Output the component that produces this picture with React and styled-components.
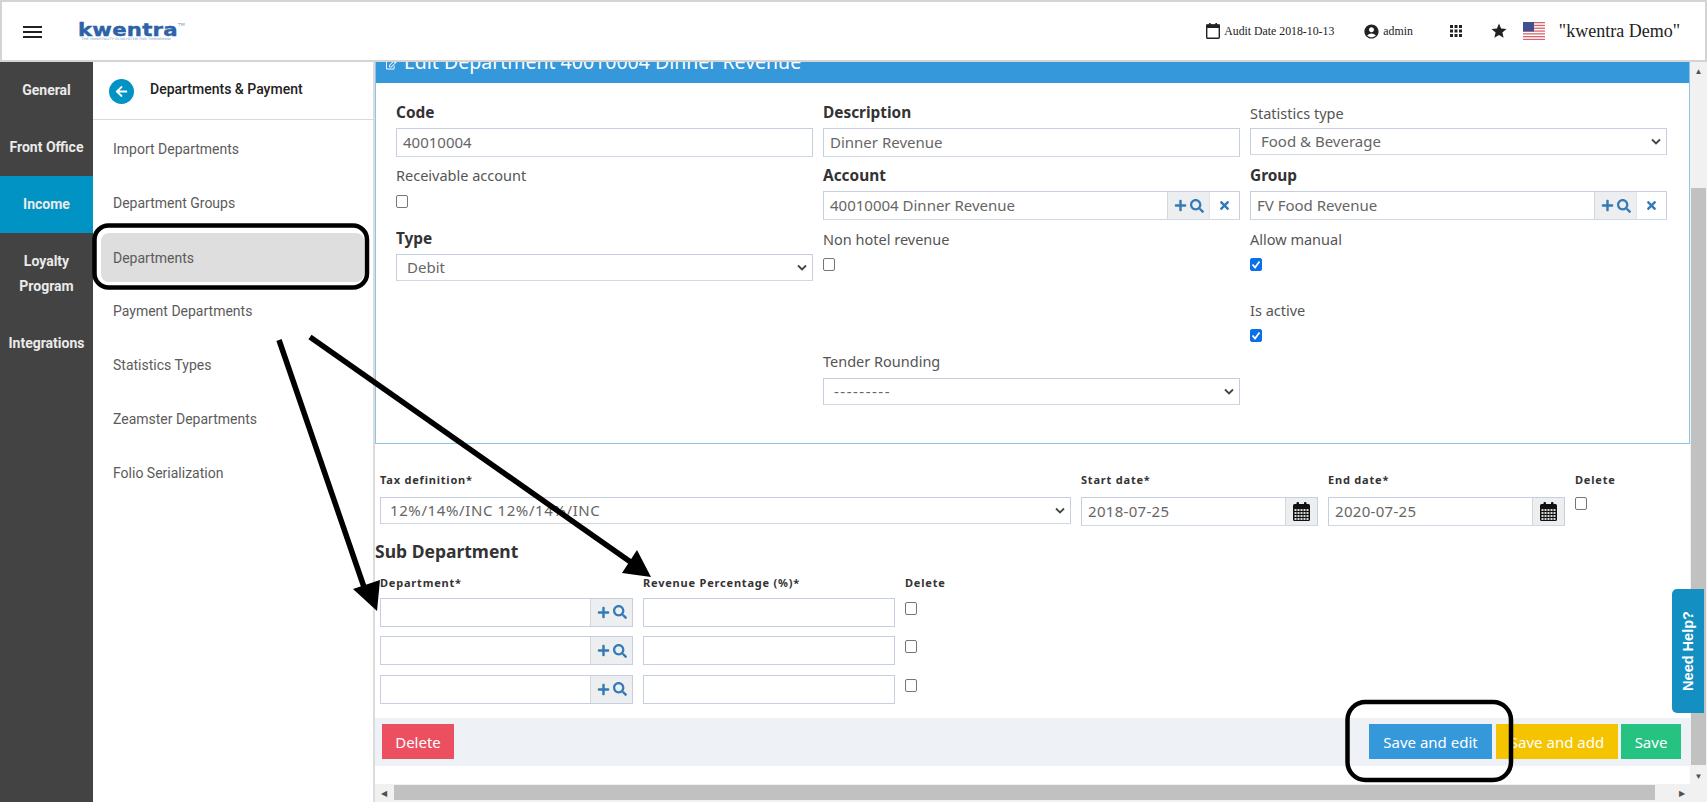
import React from 'react';
import styled, { createGlobalStyle } from 'styled-components';
import { FaPlus, FaSearch, FaTimes, FaRegEdit, FaArrowLeft } from 'react-icons/fa';
import { MdAccountCircle, MdApps, MdStar } from 'react-icons/md';

const Global = createGlobalStyle`
  html, body { margin: 0; padding: 0; height: 100%; overflow: hidden; background: #fff; }
  * { box-sizing: border-box; }
`;

const Page = styled.div`
  width: 1707px;
  height: 802px;
  position: relative;
  display: flex;
  flex-direction: column;
  overflow: hidden;
  font-family: "Noto Sans", sans-serif;
  color: #495057;
`;

const Topbar = styled.header`
  height: 62px;
  flex: none;
  display: flex;
  align-items: center;
  border: 2px solid #d4d4d4;
  padding: 0 25px 0 21px;
`;

const Burger = styled.div`
  width: 19px;
  height: 12px;
  border-top: 2px solid #222;
  border-bottom: 2px solid #222;
  margin-top: 2px;
  &::after { content: ""; display: block; height: 2px; margin-top: 3px; background: #222; }
`;

const Logo = styled.div`
  margin-left: 36px;
  margin-top: 0;
  width: 112px;
  color: #2b62a8;
  font-family: "DejaVu Sans", sans-serif;
  font-weight: 700;
  font-size: 18px;
  line-height: 15px;
  letter-spacing: 0.2px;
  -webkit-text-stroke: 0.4px #2b62a8;
  transform: scaleX(1.18);
  transform-origin: left center;
  sup { font-size: 4px; font-weight: 400; letter-spacing: 0; vertical-align: 10px; line-height: 0; -webkit-text-stroke: 0; color: #8a9aa8; }
  small {
    display: block;
    font-size: 3px;
    font-weight: 400;
    line-height: 4px;
    letter-spacing: 0.1px;
    margin-left: 3px;
    -webkit-text-stroke: 0;
    color: #6f93c4;
  }
`;

const TopRight = styled.div`
  margin-left: auto;
  display: flex;
  align-items: center;
  font-family: "Liberation Serif", serif;
  color: #222;
`;

const TopItem = styled.span`
  display: flex;
  align-items: center;
  gap: ${p => p.$gap || 4}px;
  font-size: ${p => p.$size || 11.8}px;
  margin-left: ${p => p.$ml || 0}px;
  svg { display: block; }
`;

const Body = styled.div`
  flex: 1;
  min-height: 0;
  display: flex;
`;

const Rail = styled.nav`
  width: 93px;
  flex: none;
  background: #434343;
`;

const RailItem = styled.div`
  height: ${p => p.$tall ? 82 : 57}px;
  padding-top: ${p => p.$tall ? 16 : 0}px;
  display: flex;
  align-items: ${p => p.$tall ? 'flex-start' : 'center'};
  justify-content: center;
  text-align: center;
  color: #eaeaea;
  font-family: Roboto, sans-serif;
  font-weight: 700;
  font-size: 14px;
  line-height: 25px;
  background: ${p => p.$active ? '#0093c4' : 'transparent'};
`;

const SubNav = styled.aside`
  width: 282px;
  flex: none;
  border-right: 2px solid #dcdcdc;
  font-family: Roboto, sans-serif;
`;

const SubHead = styled.div`
  height: 58px;
  display: flex;
  align-items: center;
  gap: 16px;
  padding: 0 0 4px 16px;
  border-bottom: 1px solid #dadada;
  font-weight: 500;
  font-size: 14px;
  color: #222;
`;

const BackBtn = styled.span`
  width: 25px;
  height: 25px;
  border-radius: 50%;
  background: #0093c4;
  color: #fff;
  display: flex;
  align-items: center;
  justify-content: center;
  margin-top: 5px;
`;

const SubList = styled.div`
  padding: 2px 8px 0 8px;
`;

const SubItem = styled.div`
  height: 54px;
  display: flex;
  align-items: center;
  padding-left: 12px;
  font-size: 14px;
  color: #5b5b5b;
  border-radius: 8px;
  ${p => p.$active && 'background: #dedede; margin: 3px 1px 2px 0; height: 49px;'}
`;

const Main = styled.main`
  flex: 1;
  min-width: 0;
  display: flex;
  flex-direction: column;
`;

const MainRow = styled.div`
  flex: 1;
  min-height: 0;
  display: flex;
`;

const Content = styled.div`
  flex: 1;
  min-width: 0;
  overflow: hidden;
`;

const Panel = styled.section`
  border: 1px solid #8cc4ea;
  border-top: 0;
  height: 382px;
`;

const PanelTitle = styled.div`
  height: 21px;
  background: #3498db;
  color: #fff;
  font-size: 19.5px;
  line-height: 21px;
  padding-left: 10px;
  overflow: hidden;
  display: flex;
  gap: 7px;
  span { margin-top: -11px; display: block; white-space: nowrap; }
  svg { margin-top: -3px; flex: none; }
`;

const FormGrid = styled.div`
  display: grid;
  grid-template-columns: 417px 417px 417px;
  column-gap: 10px;
  padding: 20px 0 0 20px;
`;

const Column = styled.div`
  display: flex;
  flex-direction: column;
`;

const Label = styled.label`
  display: block;
  height: 20px;
  line-height: 20px;
  font-size: ${p => p.$bold ? 15.4 : 14.5}px;
  color: ${p => p.$bold ? '#333' : '#555'};
  font-weight: ${p => p.$bold ? 700 : 400};
  margin-bottom: ${p => p.$mb ?? 5}px;
  margin-top: ${p => p.$mt || 0}px;
`;

const Field = styled.div`
  height: ${p => p.$h || 29}px;
  display: flex;
  align-items: center;
  border: 1px solid #c5cfdf;
  border-bottom-color: #d0d7e5;
  background: #fff;
  color: #666;
  font-size: 15px;
  padding-left: ${p => p.$pl ?? 6}px;
  overflow: hidden;
`;

const FieldText = styled.span`
  flex: 1;
  min-width: 0;
  white-space: nowrap;
  margin-top: -2px;
  letter-spacing: ${p => p.$ls || 0}px;
`;

const Chevron = styled.svg`
  width: 10px;
  height: 7px;
  margin-right: 5px;
  flex: none;
`;

const Addon = styled.span`
  height: 100%;
  display: flex;
  align-items: center;
  justify-content: center;
  gap: 3px;
  width: ${p => p.$w}px;
  flex: none;
  color: #337ab7;
  border-left: 1px solid ${p => p.$white ? '#dfe3ea' : '#d3d6da'};
  background: ${p => p.$white ? '#fff' : '#eceeef'};
`;

const Check = styled.span`
  display: block;
  width: 12px;
  height: 13px;
  border-radius: 2px;
  border: 1px solid ${p => p.$on ? '#0a6fe8' : '#767676'};
  background: ${p => p.$on ? '#0a6fe8' : '#fff'};
  color: #fff;
  margin-top: ${p => p.$mt || 0}px;
  margin-bottom: ${p => p.$mb || 0}px;
  svg { display: block; }
`;

const Rows = styled.div`
  padding-left: 5px;
`;

const SmallLabel = styled.div`
  font-size: 11px;
  font-weight: 700;
  letter-spacing: 0.8px;
  color: #333;
  line-height: 16px;
  height: 16px;
`;

const TaxGrid = styled.div`
  display: grid;
  grid-template-columns: 691px 237px 237px 40px;
  column-gap: 10px;
  margin-top: 28px;
`;

const TaxCol = styled.div`
  display: flex;
  flex-direction: column;
  gap: 9px;
`;

const SubTitle = styled.h3`
  margin: 13px 0 0 0;
  font-size: 17.5px;
  line-height: 24px;
  font-weight: 700;
  color: #333;
`;

const SubGrid = styled.div`
  display: grid;
  grid-template-columns: 253px 252px 50px;
  column-gap: 10px;
  row-gap: 9.5px;
  padding-left: 5px;
  margin-top: 12px;
  align-items: start;
`;

const HeaderCell = styled(SmallLabel)`
  margin-bottom: -3px;
`;

const Group = styled.div`
  display: flex;
  height: 29px;
  border: 1px solid #c5cfdf;
  background: #fff;
`;

const Actions = styled.div`
  height: 48px;
  margin-top: 14px;
  background: #eef1f6;
  display: flex;
  align-items: center;
  padding: 0 9px 0 7px;
  gap: 3px;
`;

const Btn = styled.button`
  height: 35px;
  width: ${p => p.$w}px;
  border: 0;
  padding: 0;
  color: #fff;
  background: ${p => p.$bg};
  font-family: "Noto Sans", sans-serif;
  font-size: 15px;
  margin-left: ${p => p.$ml || 0};
  margin-right: ${p => p.$mr || 0}px;
`;

const VScroll = styled.div`
  width: 17px;
  flex: none;
  background: #f1f1f1;
  display: flex;
  flex-direction: column;
  align-items: center;
`;

const VThumb = styled.div`
  width: 15px;
  flex: 1;
  margin: 109px 0 2px;
  background: #c1c1c1;
`;

const HThumb = styled.div`
  height: 15px;
  flex: 1;
  margin: 0 18px 0 2px;
  background: #c1c1c1;
`;

const HScroll = styled.div`
  height: 18px;
  flex: none;
  background: #f1f1f1;
  display: flex;
  align-items: center;
  padding: 0 17px 1px 0;
`;

const ScrollBtn = styled.div`
  width: 17px;
  height: 17px;
  flex: none;
  display: flex;
  align-items: center;
  justify-content: center;
  color: #505050;
  font-size: 8px;
`;

const Help = styled.div`
  position: absolute;
  right: 3px;
  top: 589px;
  width: 32px;
  height: 124px;
  border-radius: 5px 0 0 5px;
  background: #1390c1;
  color: #fff;
  display: flex;
  align-items: center;
  justify-content: center;
  font-family: "Liberation Sans", sans-serif;
  font-weight: 700;
  font-size: 14.5px;
  span { transform: rotate(-90deg); white-space: nowrap; display: block; }
`;

const Overlay = styled.svg`
  position: absolute;
  left: 0;
  top: 0;
  pointer-events: none;
`;

const ChevronIcon = () => (
  <Chevron viewBox="0 0 10 7"><path d="M1 1.5 L5 5.5 L9 1.5" fill="none" stroke="#444" strokeWidth="1.8" /></Chevron>
);

const Tick = () => (
  <svg width="10" height="11" viewBox="0 0 10 11"><path d="M1.5 5.5 L4 8.5 L8.5 2.5" fill="none" stroke="#fff" strokeWidth="1.8" /></svg>
);

const Flag = () => (
  <svg width="22" height="18" viewBox="0 0 22 18">
    <rect width="22" height="18" fill="#fff" />
    {[0, 2.8, 5.6, 8.4, 11.2, 14, 16.8].map(y => <rect key={y} y={y} width="22" height="1.3" fill="#d9636c" />)}
    <rect width="11" height="9.5" fill="#43508f" />
  </svg>
);

const AuditCalendar = () => (
  <svg width="14" height="16" viewBox="0 0 14 16">
    <rect x="0.7" y="2" width="12.6" height="13.3" rx="1" fill="none" stroke="#222" strokeWidth="1.4" />
    <rect x="0" y="1.5" width="14" height="3.5" fill="#222" />
    <rect x="3" y="0" width="1.6" height="2" fill="#222" />
    <rect x="9.4" y="0" width="1.6" height="2" fill="#222" />
  </svg>
);

const GridCalendar = () => (
  <svg width="17" height="19" viewBox="0 0 17 19">
    <rect x="0" y="2" width="17" height="17" rx="1.5" fill="#111" />
    <rect x="3.5" y="0" width="2.5" height="4" rx="1" fill="#111" />
    <rect x="11" y="0" width="2.5" height="4" rx="1" fill="#111" />
    {[7, 10, 13, 16].map(y => [1.5, 4.5, 7.5, 10.5, 13.5].map(x => (
      <rect key={x + '-' + y} x={x} y={y} width="2" height="2" fill="#d8d8d8" />
    )))}
  </svg>
);

const SearchAdd = () => (
  <>
    <FaPlus size={13} />
    <FaSearch size={14} />
  </>
);

const CalendarBtn = () => (
  <Addon $w={32}><GridCalendar /></Addon>
);

const rail = [
  { name: 'General' },
  { name: 'Front Office' },
  { name: 'Income', active: true },
  { name: 'Loyalty Program', tall: true },
  { name: 'Integrations' },
];

const subItems = ['Import Departments', 'Department Groups', 'Departments', 'Payment Departments', 'Statistics Types', 'Zeamster Departments', 'Folio Serialization'];

export default function App() {
  return (
    <Page>
      <Global />
      <Topbar>
        <Burger />
        <Logo>kwentra<sup>TM</sup><small>THE HOSPITALITY ECOSYSTEM FOR TOMORROW</small></Logo>
        <TopRight>
          <TopItem $gap={4}><AuditCalendar />Audit Date 2018-10-13</TopItem>
          <TopItem $ml={29} $gap={3}><MdAccountCircle size={17} />admin</TopItem>
          <TopItem $ml={34}><MdApps size={18} /></TopItem>
          <TopItem $ml={25}><MdStar size={18} /></TopItem>
          <TopItem $ml={15}><Flag /></TopItem>
          <TopItem $ml={14} $size={18}>"kwentra Demo"</TopItem>
        </TopRight>
      </Topbar>
      <Body>
        <Rail>
          {rail.map(r => <RailItem key={r.name} $active={r.active} $tall={r.tall}><span>{r.name}</span></RailItem>)}
        </Rail>
        <SubNav>
          <SubHead><BackBtn><FaArrowLeft size={13} /></BackBtn><span>Departments &amp; Payment</span></SubHead>
          <SubList>
            {subItems.map(s => <SubItem key={s} $active={s === 'Departments'}>{s}</SubItem>)}
          </SubList>
        </SubNav>
        <Main>
          <MainRow>
            <Content>
              <Panel>
                <PanelTitle><FaRegEdit size={11} /><span>Edit Department 40010004 Dinner Revenue</span></PanelTitle>
                <FormGrid>
                  <Column>
                    <Label $bold>Code</Label>
                    <Field><FieldText>40010004</FieldText></Field>
                    <Label $mt={8} $mb={10}>Receivable account</Label>
                    <Check $mb={21} />
                    <Label $bold>Type</Label>
                    <Field $pl={10} $h={27}><FieldText>Debit</FieldText><ChevronIcon /></Field>
                  </Column>
                  <Column>
                    <Label $bold>Description</Label>
                    <Field><FieldText>Dinner Revenue</FieldText></Field>
                    <Label $bold $mt={9}>Account</Label>
                    <Field>
                      <FieldText>40010004 Dinner Revenue</FieldText>
                      <Addon $w={42}><SearchAdd /></Addon>
                      <Addon $w={30} $white><FaTimes size={13} /></Addon>
                    </Field>
                    <Label $mt={9} $mb={9}>Non hotel revenue</Label>
                    <Check />
                    <Label $mt={80} $mb={7}>Tender Rounding</Label>
                    <Field $pl={10} $h={27}><FieldText $ls={1.5}>---------</FieldText><ChevronIcon /></Field>
                  </Column>
                  <Column>
                    <Label>Statistics type</Label>
                    <Field $pl={10} $h={27}><FieldText>Food &amp; Beverage</FieldText><ChevronIcon /></Field>
                    <Label $bold $mt={11}>Group</Label>
                    <Field>
                      <FieldText>FV Food Revenue</FieldText>
                      <Addon $w={42}><SearchAdd /></Addon>
                      <Addon $w={30} $white><FaTimes size={13} /></Addon>
                    </Field>
                    <Label $mt={9} $mb={9}>Allow manual</Label>
                    <Check $on><Tick /></Check>
                    <Label $mt={29} $mb={9}>Is active</Label>
                    <Check $on><Tick /></Check>
                  </Column>
                </FormGrid>
              </Panel>
              <Rows>
                <TaxGrid>
                  <TaxCol>
                    <SmallLabel>Tax definition*</SmallLabel>
                    <Field $pl={9} $h={27}><FieldText $ls={0.6}>12%/14%/INC 12%/14%/INC</FieldText><ChevronIcon /></Field>
                  </TaxCol>
                  <TaxCol>
                    <SmallLabel>Start date*</SmallLabel>
                    <Field><FieldText $ls={0.3}>2018-07-25</FieldText><CalendarBtn /></Field>
                  </TaxCol>
                  <TaxCol>
                    <SmallLabel>End date*</SmallLabel>
                    <Field><FieldText $ls={0.3}>2020-07-25</FieldText><CalendarBtn /></Field>
                  </TaxCol>
                  <TaxCol>
                    <SmallLabel>Delete</SmallLabel>
                    <Check />
                  </TaxCol>
                </TaxGrid>
              </Rows>
              <SubTitle>Sub Department</SubTitle>
              <SubGrid>
                <HeaderCell>Department*</HeaderCell>
                <HeaderCell>Revenue Percentage (%)*</HeaderCell>
                <HeaderCell>Delete</HeaderCell>
                {[0, 1, 2].map(i => (
                  <React.Fragment key={i}>
                    <Group><FieldText /><Addon $w={42}><SearchAdd /></Addon></Group>
                    <Group />
                    <Check $mt={4} />
                  </React.Fragment>
                ))}
              </SubGrid>
              <Actions>
                <Btn $bg="#ec4f5f" $w={72}>Delete</Btn>
                <Btn $bg="#3498db" $w={123} $ml="auto" $mr={1}>Save and edit</Btn>
                <Btn $bg="#f5c400" $w={122}>Save and add</Btn>
                <Btn $bg="#26c281" $w={60}>Save</Btn>
              </Actions>
            </Content>
            <VScroll>
              <ScrollBtn>▲</ScrollBtn>
              <VThumb />
              <ScrollBtn>▼</ScrollBtn>
            </VScroll>
          </MainRow>
          <HScroll>
            <ScrollBtn>◀</ScrollBtn>
            <HThumb />
            <ScrollBtn>▶</ScrollBtn>
          </HScroll>
        </Main>
      </Body>
      <Help><span>Need Help?</span></Help>
      <Overlay width="1707" height="802" viewBox="0 0 1707 802">
        <rect x="94.5" y="225.5" width="272.5" height="62" rx="14" fill="none" stroke="#000" strokeWidth="4.5" />
        <rect x="1347.5" y="702" width="163.5" height="78" rx="18" fill="none" stroke="#000" strokeWidth="4.5" />
        <path d="M279 340 L365 590" stroke="#000" strokeWidth="5.5" fill="none" />
        <polygon points="353,589 380,580 377,611" fill="#000" />
        <path d="M310 337 L632 563" stroke="#000" strokeWidth="5.5" fill="none" />
        <polygon points="637,550 622,573 651,577" fill="#000" />
      </Overlay>
    </Page>
  );
}
